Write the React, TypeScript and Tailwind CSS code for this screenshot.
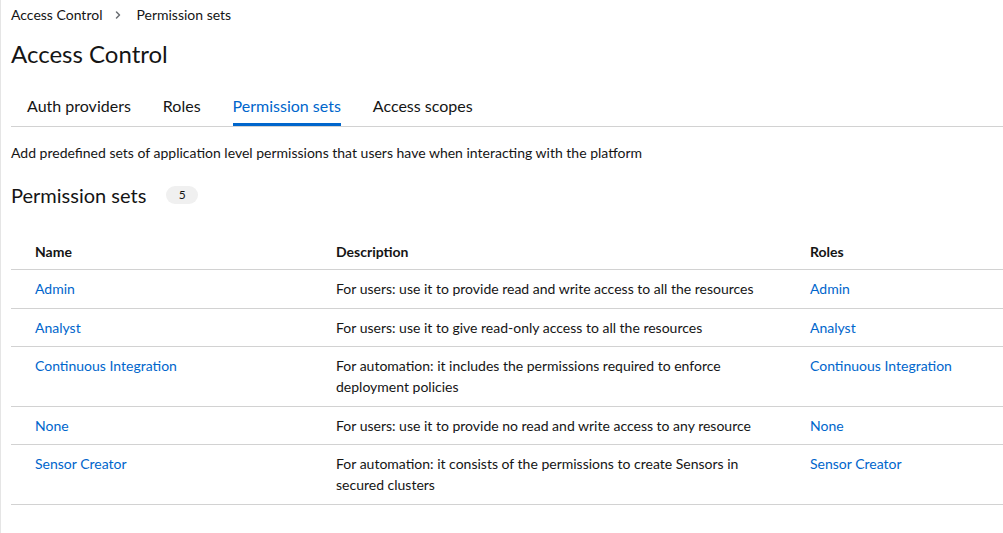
import { ChevronRight } from "lucide-react"

type PermissionSet = {
	name: string
	description: string
	roles: string[]
}

const permissionSets: PermissionSet[] = [
	{
		name: "Admin",
		description: "For users: use it to provide read and write access to all the resources",
		roles: ["Admin"]
	},
	{
		name: "Analyst",
		description: "For users: use it to give read-only access to all the resources",
		roles: ["Analyst"]
	},
	{
		name: "Continuous Integration",
		description:
			"For automation: it includes the permissions required to enforce deployment policies",
		roles: ["Continuous Integration"]
	},
	{
		name: "None",
		description: "For users: use it to provide no read and write access to any resource",
		roles: ["None"]
	},
	{
		name: "Sensor Creator",
		description:
			"For automation: it consists of the permissions to create Sensors in secured clusters",
		roles: ["Sensor Creator"]
	}
]

const tabs = ["Auth providers", "Roles", "Permission sets", "Access scopes"]

export default function App() {
	const activeTab = "Permission sets"

	return (
		<div className="min-h-screen bg-white pl-[10px] text-[#151515] font-['Lato',sans-serif] border-l border-[#e5e5e5]">
			<nav className="flex items-center h-[29px] text-sm">
				<span>Access Control</span>
				<ChevronRight className="ml-[10px] mr-[12px] text-[#6a6e73]" size={12} strokeWidth={3} />
				<span>Permission sets</span>
			</nav>
			<h1 className="text-2xl leading-[36px] mt-[7px]">Access Control</h1>
			<div className="flex mt-[12px] border-b border-[#d2d2d2]">
				{tabs.map((tab) => (
					<div key={tab} className="px-4">
						<div
							className={`pt-[10px] pb-[5px] text-base leading-6 border-b-[3px] ${
								tab === activeTab
									? "text-[#0066cc] border-[#0066cc]"
									: "border-transparent"
							}`}
						>
							{tab}
						</div>
					</div>
				))}
			</div>
			<p className="text-sm leading-[21px] mt-[15px]">
				Add predefined sets of application level permissions that users have when interacting
				with the platform
			</p>
			<div className="flex items-center mt-[17px]">
				<h2 className="text-xl leading-[30px]">Permission sets</h2>
				<span className="ml-[20px] w-8 text-center rounded-full bg-[#f0f0f0] text-xs leading-[18px]">
					5
				</span>
			</div>
			<table className="w-full mt-[17px] text-sm leading-[21px] border-collapse">
				<thead>
					<tr className="border-b border-[#d2d2d2]">
						<th className="w-[309px] pl-6 pt-[14px] pb-[7px] text-left font-bold">Name</th>
						<th className="w-[474px] pl-4 pt-[14px] pb-[7px] text-left font-bold">
							Description
						</th>
						<th className="pl-4 pt-[14px] pb-[7px] text-left font-bold">Roles</th>
					</tr>
				</thead>
				<tbody>
					{permissionSets.map((set) => (
						<tr key={set.name} className="border-b border-[#d2d2d2] align-top">
							<td className="pl-6 pt-[8px] pb-[8.5px]">
								<a className="text-[#0066cc]" href="#">
									{set.name}
								</a>
							</td>
							<td className="pl-4 pr-6 pt-[8px] pb-[8.5px]">{set.description}</td>
							<td className="pl-4 pt-[8px] pb-[8.5px]">
								{set.roles.map((role) => (
									<a key={role} className="text-[#0066cc]" href="#">
										{role}
									</a>
								))}
							</td>
						</tr>
					))}
				</tbody>
			</table>
		</div>
	)
}
